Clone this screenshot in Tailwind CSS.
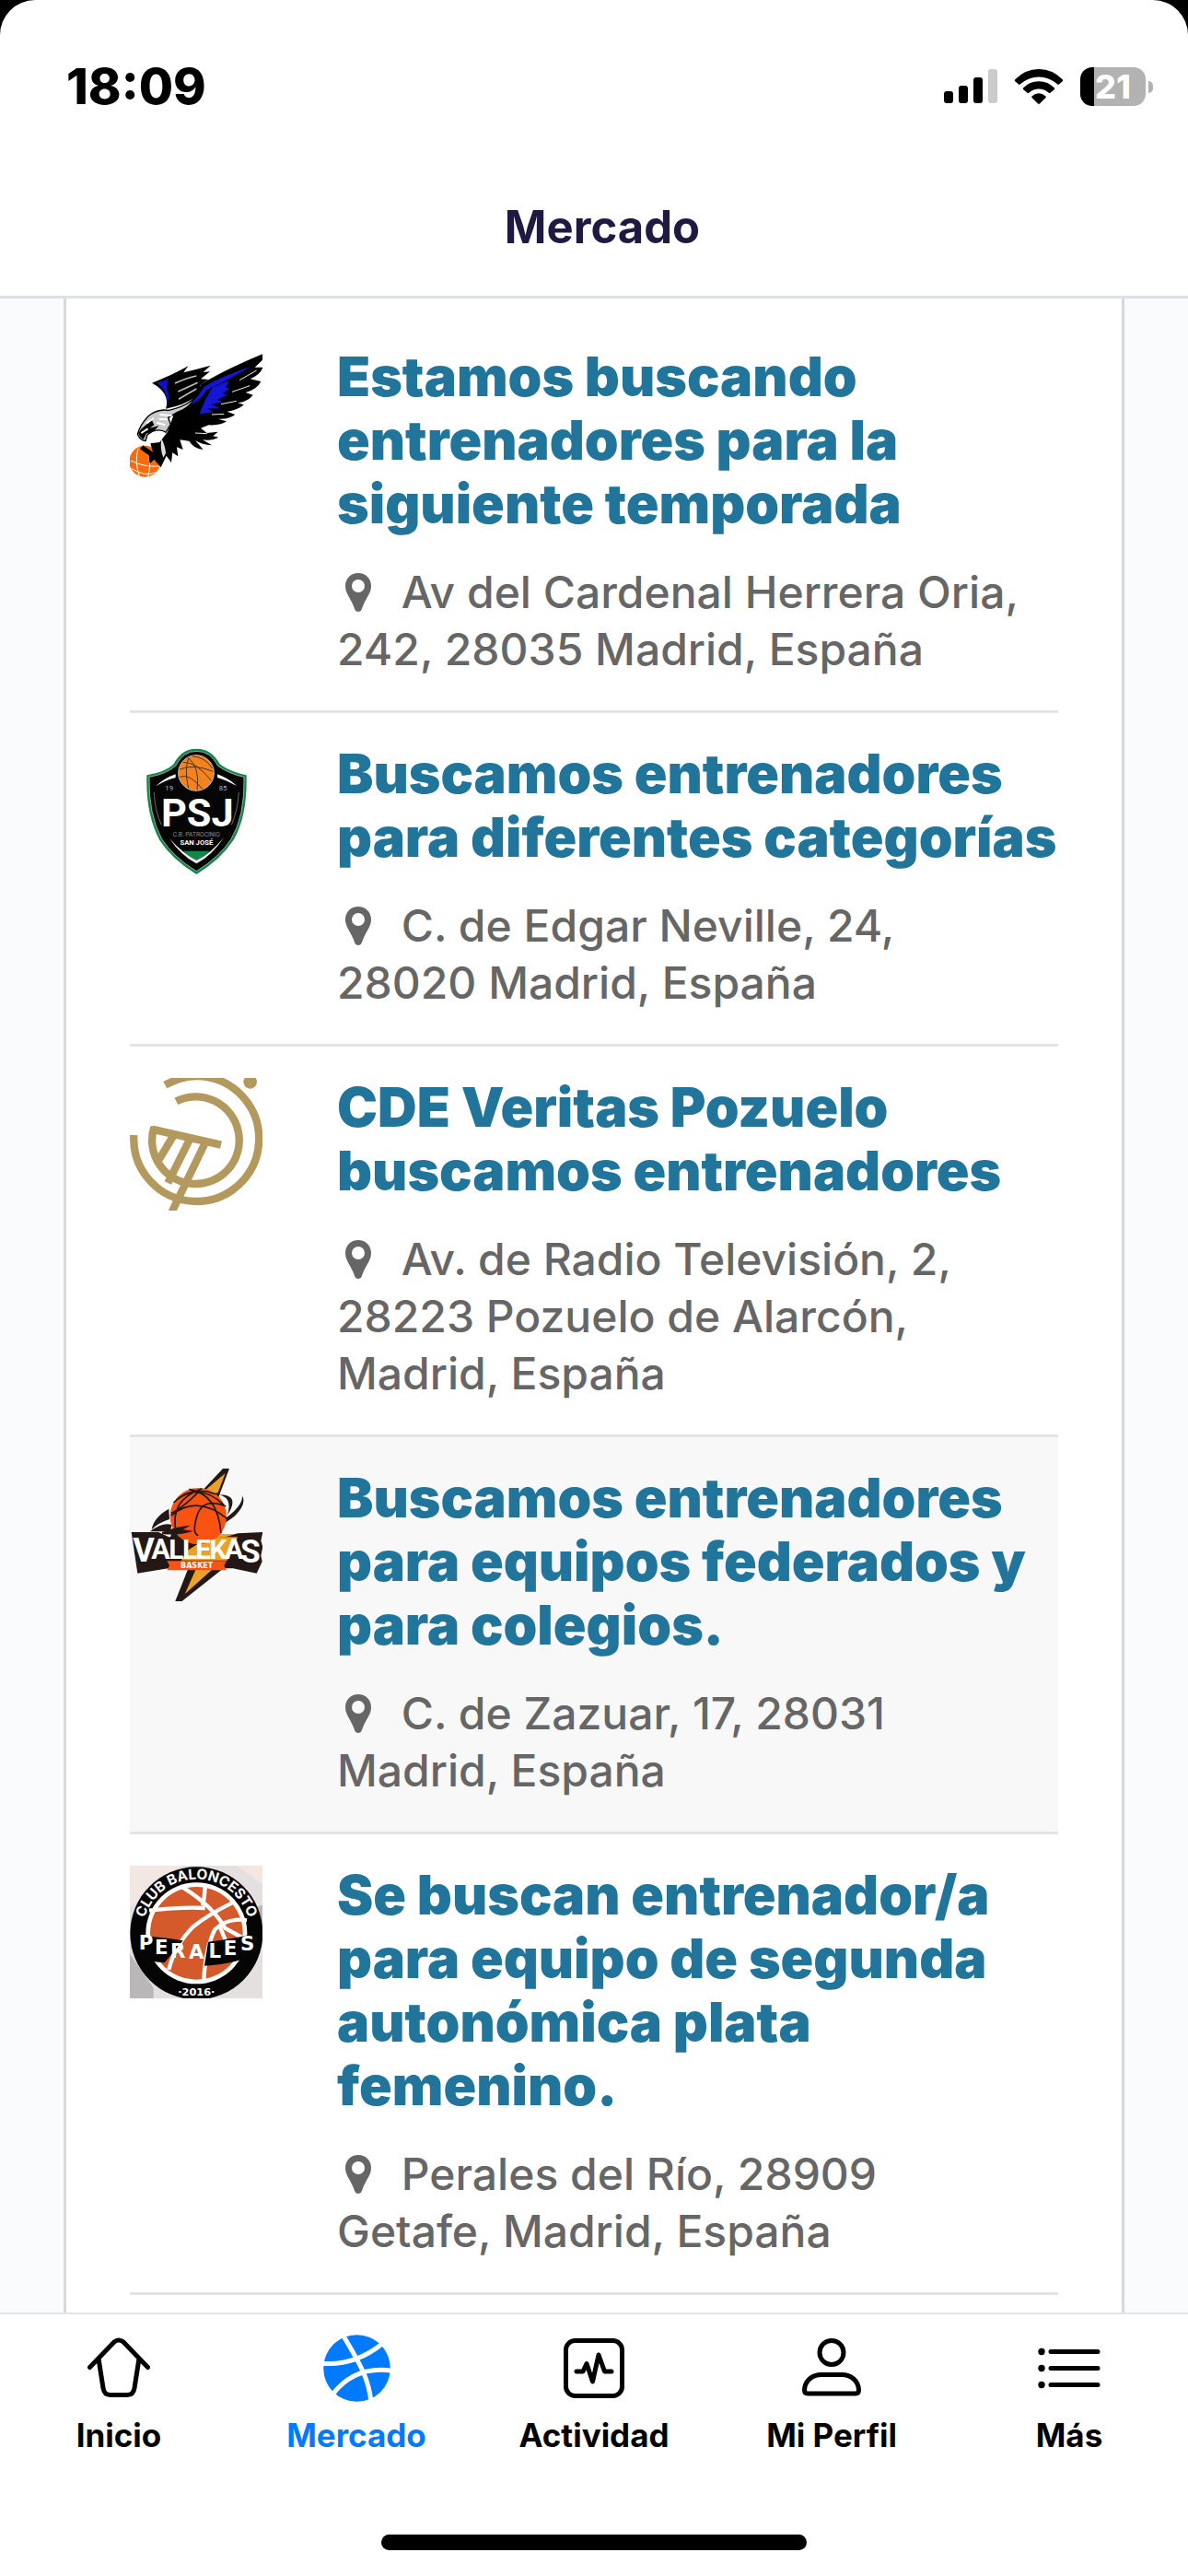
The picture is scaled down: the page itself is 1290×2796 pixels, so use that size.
<!DOCTYPE html>
<html lang="es">
<head>
<meta charset="utf-8">
<meta name="viewport" content="width=device-width, initial-scale=1">
<title>Mercado</title>
<script src="https://cdn.jsdelivr.net/npm/@tailwindcss/browser@4"></script>
</head>
<body class="bg-black font-['Inter',sans-serif]">
<svg class="hidden" aria-hidden="true">
  <symbol id="pin" viewBox="0 0 28 42"><path fill="currentColor" fill-rule="evenodd" d="M14 0C6 0 0 6 0 14c0 8 5 12 9 22 1 3 2 6 5 6s4-3 5-6c4-10 9-14 9-22C28 6 22 0 14 0zm0 7a7 7 0 1 1 0 14 7 7 0 0 1 0-14z"/></symbol>
</svg>
<div class="flex h-screen flex-col overflow-hidden rounded-t-[38px] bg-white">

  <header class="shrink-0 border-b-3 border-[#dee1e3]">
    <div class="flex h-[188px] items-center justify-between pl-[72px] pr-[38px]">
      <time class="text-[54px] leading-[60px] font-extrabold text-black">18:09</time>
      <div class="flex items-center">
        <svg class="h-[38px] w-[58px]" viewBox="0 0 58 38" role="img" aria-label="Cobertura">
          <rect x="0" y="24" width="10" height="13" rx="3"/><rect x="16" y="18" width="10" height="19" rx="3"/><rect x="32" y="9" width="10" height="28" rx="3"/><rect x="48" y="0" width="10" height="37" rx="3" fill="#cbcbcb"/>
        </svg>
        <svg class="ml-[18px] h-[38px] w-[54px]" viewBox="0 0 54 38" role="img" aria-label="Wifi">
          <path d="M1 11.500Q12 0 27 0T53 11.500Q53.500 12.500 53 13L49 16.500Q48 17.200 47 16.300Q38 8.500 27 8.500T7 16.300Q6 17.200 5 16.500L1 13Q.5 12.500 1 11.500z"/>
          <path d="M10 20.500Q17 13.200 27 13.200T44 20.500Q44.500 21.500 44 22L39.500 25.700Q38.500 26.400 37.500 25.500Q33 21.500 27 21.500T16.500 25.500Q15.500 26.400 14.500 25.700L10 22Q9.500 21.500 10 20.500z"/>
          <path d="M19.500 29.500Q23 26.300 27 26.300T34.500 29.500Q35.300 30.300 34.500 31L28 37.500Q27 38.300 26 37.500L19.500 31Q18.700 30.300 19.500 29.500z"/>
        </svg>
        <div class="ml-[18px] flex items-center gap-[3px]">
          <div class="flex h-[42px] w-[71px] items-center justify-center rounded-[13px] bg-linear-to-r from-black from-[15px] to-[#b2b2b2] to-[15px] text-[36px] leading-none font-extrabold text-white">21</div>
          <div class="h-[13px] w-[5px] rounded-r-full bg-[#b2b2b2]"></div>
        </div>
      </div>
    </div>
    <div class="flex h-[133px] justify-center pt-[29px] pl-[18px]">
      <h1 class="text-[49px] leading-[60px] font-bold text-[#201a42]">Mercado</h1>
    </div>
  </header>

  <main class="min-h-0 flex-1 overflow-hidden bg-[#f9fbfd] px-[69px]">
    <ul class="h-full border-x-3 border-[#d5d9dc] bg-white px-[69px] pt-[19px]">

      <li class="flex border-b-3 border-[#e4e4e4] pt-[34px] pb-[35px]">
        <svg class="size-36 shrink-0" viewBox="33 21 432 432" role="img" aria-label="Escudo águila">
          <circle cx="82" cy="392" r="51" fill="#fb6a0b"/>
          <path d="M36 390Q80 412 128 408M60 350Q48 395 64 440M92 366Q104 400 92 442M38 415Q80 444 118 428" fill="none" stroke="#fff" stroke-width="3"/>
          <path d="M105 137Q170 112 223 82L208 103Q252 92 296 80L272 102 294 100 264 124 290 126Q258 142 262 150L244 184Q210 210 150 221Q166 170 105 137z"/>
          <path d="M120 136L158 126Q150 152 160 180L156 206Q156 160 120 136z" fill="#1010c8"/>
          <path d="M180 138Q220 120 250 114M190 165Q225 150 254 136M192 190Q225 170 250 156" stroke="#bbb" stroke-width="5" fill="none"/>
          <path d="M266 140Q350 90 466 42L465 62 440 86 466 86Q460 108 425 124L460 132Q448 158 410 168L434 176Q420 196 385 202L404 208Q388 224 350 230L376 240Q356 256 320 254L348 262Q330 276 290 274L264 284 284 300 320 296 304 310 322 314Q300 326 270 322L300 340Q268 338 246 324L272 354Q240 350 226 326L196 322 206 354 186 346 190 376 172 364 168 396 152 374 134 412 112 386 98 400 94 372 66 352 76 340 108 362 100 334 130 330 156 296 176 240Q214 220 240 186z"/>
          <path d="M218 212Q258 184 274 150Q330 116 426 84Q350 130 284 160Q256 204 218 212zM302 152L356 128 346 152 358 154 336 172 350 176 318 192 336 198 298 208 328 218 286 220 304 232 260 238Q276 190 302 152z" fill="#1515d4"/>
          <path d="M268 142Q258 176 232 196Q206 216 160 226Q122 220 92 246Q66 274 58 304Q66 324 84 326L90 306 108 294Q134 286 150 298L166 272 158 250 188 232Q226 220 246 184Q262 160 268 142z" fill="#c9cacc" stroke="#000" stroke-width="4"/>
          <path d="M60 300Q72 282 90 270L104 256 112 274 98 284 128 276Q108 300 86 302L78 320Q68 318 60 300z"/>
          <path d="M88 268L110 252M130 240L170 244M128 254L156 256M120 266L148 274M70 300L92 286" stroke="#fff" stroke-width="6"/>
          <path d="M136 318Q148 340 150 366L142 380Q130 350 136 318z" fill="#ddd"/>
          <path d="M246 300L284 302M300 240L340 238M330 206L380 196M366 166L424 146M390 128L446 96" stroke="#eee" stroke-width="3"/>
        </svg>
        <div class="-mt-[3px] -mr-2 ml-[81px] min-w-0 flex-1">
          <h2 class="text-[59px] leading-[69px] font-black text-[#21759b]"><a href="#">Estamos buscando entrenadores para la siguiente temporada</a></h2>
          <p class="mt-[31px] pr-10 text-[48px] leading-[62px] font-medium text-[#666]"><svg class="mr-5 ml-[9px] inline h-[42px] w-7 align-[-4px]" aria-hidden="true"><use href="#pin"/></svg> Av del Cardenal Herrera Oria, 242, 28035 Madrid, España</p>
        </div>
      </li>

      <li class="flex border-b-3 border-[#e4e4e4] pt-[34px] pb-[35px]">
        <svg class="size-36 shrink-0" viewBox="33 24 432 432" role="img" aria-label="Escudo C.B. Patrocinio San José">
          <path d="M250 38Q300 38 326 88Q360 114 413 124Q416 260 370 336Q330 398 250 447Q170 398 130 336Q84 250 88 124Q150 114 176 88Q200 38 250 38z" fill="#13864a"/>
          <path d="M250 46Q296 46 320 94Q356 120 405 130Q408 258 363 332Q326 390 250 437Q174 390 137 332Q93 250 96 130Q152 120 182 94Q206 46 250 46z" fill="#050505" stroke="#dfe9e3" stroke-width="2"/>
          <path d="M206 371H294L250 408z" fill="#13864a"/>
          <path d="M162 330Q200 386 250 412Q300 386 340 326Q296 380 250 402Q206 380 162 330z" fill="#fff"/>
          <path d="M118 160Q145 134 182 121V132Q150 140 118 160zM382 160Q355 134 318 121V132Q350 140 382 160z" fill="#fff"/>
          <path d="M112 180Q114 240 136 286M388 180Q384 240 364 286" stroke="#999" stroke-width="2" fill="none"/>
          <circle cx="249" cy="117" r="58" fill="#f2841f" stroke="#b9b9b9" stroke-width="3"/>
          <path d="M196 105Q240 86 304 112M206 82Q250 80 298 142M224 68Q262 100 252 172M236 62Q280 66 302 102M196 130Q226 116 270 170M224 68Q210 110 224 166" stroke="#54301a" stroke-width="3" fill="none"/>
          <g fill="#fff" text-anchor="middle" font-family="Roboto, sans-serif">
            <text x="253" y="290" font-size="130" font-weight="700">PSJ</text>
            <g font-size="23" fill="#b5b5b5"><text x="161" y="173">19</text><text x="336" y="173">85</text><text x="250" y="323" font-size="20" fill="#8b8b8b">C.B. PATROCINIO</text></g>
            <text x="250" y="350" font-size="23" font-weight="700">SAN JOSÉ</text>
          </g>
        </svg>
        <div class="-mt-[3px] -mr-2 ml-[81px] min-w-0 flex-1">
          <h2 class="text-[59px] leading-[69px] font-black text-[#21759b]"><a href="#">Buscamos entrenadores para diferentes categorías</a></h2>
          <p class="mt-[31px] pr-10 text-[48px] leading-[62px] font-medium text-[#666]"><svg class="mr-5 ml-[9px] inline h-[42px] w-7 align-[-4px]" aria-hidden="true"><use href="#pin"/></svg> C. de Edgar Neville, 24, 28020 Madrid, España</p>
        </div>
      </li>

      <li class="flex border-b-3 border-[#e4e4e4] pt-[34px] pb-[35px]">
        <svg class="size-36 shrink-0" viewBox="33 30 432 432" role="img" aria-label="Escudo CDE Veritas Pozuelo">
          <g fill="none" stroke="#b3995d" stroke-width="25">
            <path d="M148 53Q200 24 252 24A204 204 0 1 1 46 216"/>
            <path d="M184 106A142 142 0 1 1 112 190"/>
            <path d="M105 197L330 248M176 216L128 296M228 230L157 372M279 240L170 466"/>
          </g>
          <circle cx="425" cy="43" r="22" fill="#b3995d"/>
        </svg>
        <div class="-mt-[3px] -mr-2 ml-[81px] min-w-0 flex-1">
          <h2 class="text-[59px] leading-[69px] font-black text-[#21759b]"><a href="#">CDE Veritas Pozuelo buscamos entrenadores</a></h2>
          <p class="mt-[31px] pr-10 text-[48px] leading-[62px] font-medium text-[#666]"><svg class="mr-5 ml-[9px] inline h-[42px] w-7 align-[-4px]" aria-hidden="true"><use href="#pin"/></svg> Av. de Radio Televisión, 2, 28223 Pozuelo de Alarcón, Madrid, España</p>
        </div>
      </li>

      <li class="flex border-b-3 border-[#e4e4e4] bg-[#f8f8f8] pt-[34px] pb-[35px]">
        <svg class="size-36 shrink-0" viewBox="33 27 432 432" role="img" aria-label="Escudo Vallekas Basket">
          <path d="M336 27H357L322 120 290 240 384 240 340 350 200 461H180L224 350 150 300 180 200 240 130z" fill="#231815"/>
          <path d="M344 42L280 96 300 110 320 105zM300 240H376L330 330 212 436 250 350 200 290z" fill="#e9a126"/>
          <path d="M160 158Q110 186 104 226Q124 204 162 192zM320 112Q396 110 350 180Q370 120 320 112z" fill="#231815"/>
          <path d="M398 114Q416 140 374 182Q310 232 210 254Q320 216 374 164Q404 134 398 114zM98 232Q140 200 170 210L164 232z" fill="#231815"/>
          <path d="M38 234H126L160 250H344L384 238 466 234 460 262 466 282 460 310 464 330 446 368 370 352H158L58 368z" fill="#231815"/>
          <path d="M290 250H384L350 326H200L226 290z" fill="#e9a126"/>
          <circle cx="256" cy="182" r="92" fill="#f95312"/>
          <path d="M176 138Q230 80 312 110M184 130Q260 70 340 146M168 180Q250 110 350 190M226 94Q320 110 330 238M268 92Q160 130 184 234M346 150Q270 120 252 180T256 244M168 172Q200 160 262 98" stroke="#231815" stroke-width="5" fill="none"/>
          <path d="M138 234Q180 216 230 212L206 226 240 230Q190 246 138 240z" fill="#231815"/>
          <path d="M154 328H348L340 343 348 358H154L162 343z" fill="#f95312"/>
          <g text-anchor="middle" fill="#fff" font-family="Roboto, sans-serif" font-weight="700">
            <text y="320" font-size="90"><tspan x="78" y="330" font-size="108">V</tspan><tspan x="134" y="322" font-size="92">A</tspan><tspan x="184" y="320">L</tspan><tspan x="228">L</tspan><tspan x="272">E</tspan><tspan x="320">K</tspan><tspan x="372" y="322" font-size="92">A</tspan><tspan x="426" y="332" font-size="106">S</tspan></text>
            <text x="251" y="352" font-size="24" font-family="'DejaVu Sans', sans-serif">BASKET</text>
          </g>
        </svg>
        <div class="-mt-[3px] -mr-2 ml-[81px] min-w-0 flex-1">
          <h2 class="text-[59px] leading-[69px] font-black text-[#21759b]"><a href="#">Buscamos entrenadores para equipos federados y para colegios.</a></h2>
          <p class="mt-[31px] pr-10 text-[48px] leading-[62px] font-medium text-[#666]"><svg class="mr-5 ml-[9px] inline h-[42px] w-7 align-[-4px]" aria-hidden="true"><use href="#pin"/></svg> C. de Zazuar, 17, 28031 Madrid, España</p>
        </div>
      </li>

      <li class="flex border-b-3 border-[#e4e4e4] pt-[34px] pb-[35px]">
        <svg class="size-36 shrink-0" viewBox="33 42 432 432" role="img" aria-label="Escudo Club Baloncesto Perales">
          <path fill="#e3e0df" d="M33 42h432v432H33z"/>
          <path fill="#f3e7e4" d="M33 42H200L33 180zM380 42h85v60z"/>
          <path fill="#b9b7b7" d="M33 330L110 440V474H33zM440 180l25-10v60z"/>
          <circle cx="250" cy="262" r="216" fill="#050505"/>
          <circle cx="250" cy="262" r="165" fill="#fff"/>
          <circle cx="250" cy="262" r="151" fill="#d4592b"/>
          <g fill="none" stroke="#fff" stroke-width="13">
            <path d="M204 112Q300 170 344 246L410 282M96 188Q200 176 278 180M278 110Q276 150 270 172M372 160Q290 200 240 240Q180 300 160 380M414 220Q350 210 310 250Q280 310 274 412M326 240L344 284"/>
          </g>
          <path d="M60 270Q150 276 206 286L146 358Q90 356 60 330zM288 290Q380 280 440 262L444 330Q370 364 276 368z" fill="#050505"/>
          <defs><path id="crest-top" d="M74 262A176 176 0 0 1 426 262"/></defs>
          <g fill="#fff" font-family="Inter, sans-serif" font-weight="700" text-anchor="middle">
            <text font-size="46"><textPath href="#crest-top" startOffset="50%">CLUB BALONCESTO</textPath></text>
            <text font-size="64" font-family="'DejaVu Sans', sans-serif"><tspan x="86" y="314">P</tspan><tspan x="136" y="331">E</tspan><tspan x="190" y="341">R</tspan><tspan x="250" y="344">A</tspan><tspan x="310" y="341">L</tspan><tspan x="360" y="333">E</tspan><tspan x="416" y="318">S</tspan></text>
            <text x="250" y="466" font-size="34" font-family="'DejaVu Sans', sans-serif">·2016·</text>
          </g>
        </svg>
        <div class="-mt-[3px] -mr-2 ml-[81px] min-w-0 flex-1">
          <h2 class="text-[59px] leading-[69px] font-black text-[#21759b]"><a href="#">Se buscan entrenador/a para equipo de segunda autonómica plata femenino.</a></h2>
          <p class="mt-[31px] pr-10 text-[48px] leading-[62px] font-medium text-[#666]"><svg class="mr-5 ml-[9px] inline h-[42px] w-7 align-[-4px]" aria-hidden="true"><use href="#pin"/></svg> Perales del Río, 28909 Getafe, Madrid, España</p>
        </div>
      </li>
    </ul>
  </main>

  <nav class="shrink-0 border-t-2 border-[#e2e5e9] bg-white pt-[22px] pb-7" aria-label="Principal">
    <div class="grid grid-cols-5 text-[35px] leading-10 font-bold text-black">
      <a href="#" class="flex flex-col items-center gap-4">
        <svg class="h-[73px] w-[68px]" viewBox="0 -4 68 73" fill="none" stroke="currentColor" stroke-width="5" stroke-linecap="round" stroke-linejoin="round" aria-hidden="true"><path d="M2.500 31.500L29 4Q34 0 39 4L65.500 31.500M12 22L17 54Q18 61.500 25 61.500H43Q50 61.500 51 54L56 22"/></svg>
        Inicio
      </a>
      <a href="#" aria-current="page" class="flex flex-col items-center gap-4 text-[#007aff]">
        <svg class="size-[73px]" viewBox="0 0 73 73" aria-hidden="true"><circle cx="36.500" cy="36.500" r="36.300" fill="currentColor"/><path d="M21 0Q38 28 44 42T52 73M-1 31.300Q34 34 64 10M73 39Q34 34 10 65" fill="none" stroke="#fff" stroke-width="5"/></svg>
        Mercado
      </a>
      <a href="#" class="flex flex-col items-center gap-4">
        <svg class="h-[73px] w-[66px]" viewBox="0 -4 66 73" fill="none" stroke="currentColor" stroke-width="5" stroke-linecap="round" stroke-linejoin="round" aria-hidden="true"><rect x="2.500" y="2.500" width="61" height="60" rx="10"/><path d="M14 36H21L25 27.500 31.500 47 38 18 44.500 36H52"/></svg>
        Actividad
      </a>
      <a href="#" class="flex flex-col items-center gap-4">
        <svg class="h-[73px] w-16" viewBox="0 -4 64 73" fill="none" stroke="currentColor" stroke-width="5" stroke-linejoin="round" aria-hidden="true"><circle cx="32" cy="15.500" r="13"/><path d="M2.500 56C3 46 11 39.500 21 39.500H43C53 39.500 61 46 61.500 56Q61.500 60 58 60H6Q2.500 60 2.500 56z"/></svg>
        Mi Perfil
      </a>
      <a href="#" class="flex flex-col items-center gap-4">
        <svg class="h-[73px] w-[68px]" viewBox="0 0 68 73" fill="currentColor" aria-hidden="true"><circle cx="4" cy="18.500" r="3.700"/><circle cx="4" cy="36.500" r="3.700"/><circle cx="4" cy="54.500" r="3.700"/><path d="M14 18.500H65M14 36.500H65M14 54.500H65" stroke="currentColor" stroke-width="5" stroke-linecap="round"/></svg>
        Más
      </a>
    </div>
    <div class="mx-auto mt-[88px] h-[17px] w-[462px] rounded-full bg-black"></div>
  </nav>
</div>
</body>
</html>
